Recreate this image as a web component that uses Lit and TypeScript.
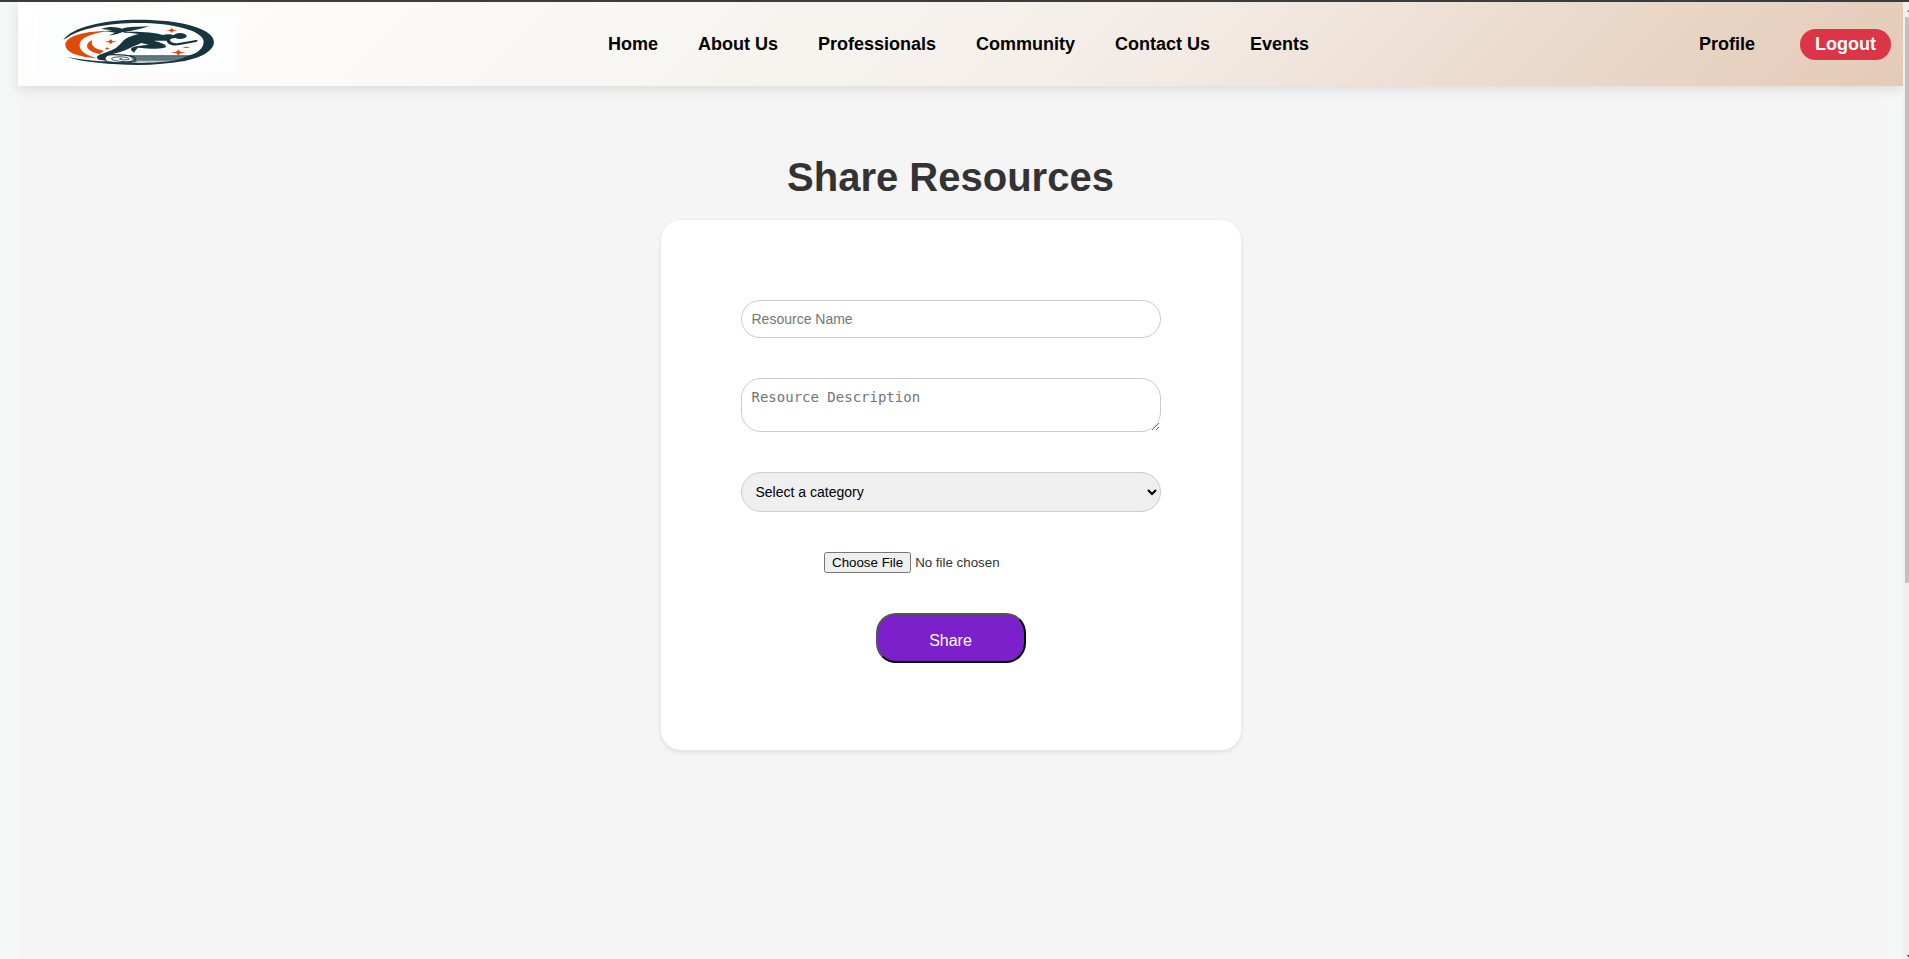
import { LitElement, html, css } from "lit";
import { customElement } from "lit/decorators.js";

@customElement("brand-logo")
class BrandLogo extends LitElement {
  static styles = css`
    :host { display: block; width: 200px; height: 60px; background: #fcfefd; }
    .art { display: block; width: 200px; height: 60px; filter: blur(0.4px); }
    .navy { fill: #18343f; }
    .orange { fill: #df4a0b; }
    .grey { fill: #6c7f86; }
    .line { fill: none; stroke: #18343f; stroke-width: 3.5; }
    .thin { fill: none; stroke: #18343f; stroke-width: 2.5; }
    .stripe { fill: none; stroke: #47606a; stroke-width: 2; }
  `;
  render() {
    return html`<svg class="art" viewBox="114 36 600 180" role="img" aria-label="Logo">
      <path class="grey" d="M385 165H578L560 182H400Z" />
      <path class="stripe" d="M400 170H575M400 177H566M390 183H555" />
      <path class="navy" d="M190 119C218 80 315 59 415 59C545 59 641 86 642 126C641 152 606 172 560 181C510 191 462 195 415 195C330 194 250 187 200 171C260 182 340 188 415 188C500 188 540 181 555 171C594 161 611 146 611 124C608 92 520 69 415 69C325 69 240 85 200 114Z" />
      <path class="orange" d="M327 93C240 93 195 112 196 136C198 158 235 171 290 175C252 163 237 151 239 132C241 115 270 101 327 93Z" />
      <path class="orange" d="M277 121C254 128 252 154 299 162L312 153C286 147 270 138 277 121Z" />
      <path class="navy" d="M304 87C330 77 350 82 366 86C390 78 415 82 449 78C430 86 412 87 392 93C372 96 362 97 352 102L325 107L345 98L315 93L338 91Z" />
      <path class="navy" d="M372 96C410 94 465 97 488 105C502 101 516 103 526 107L524 115C512 115 508 119 512 124C518 130 528 131 536 129L588 120C595 120 594 125 588 126L535 136C514 138 502 132 500 122L462 122C480 127 504 134 497 142C485 149 440 145 414 143L408 149L402 158L393 150C390 142 404 137 446 134L424 129C408 136 396 141 384 147C368 155 350 159 328 165C315 170 313 178 323 183L297 179C282 170 298 163 315 158C338 152 353 142 363 130C372 118 384 109 416 102C400 99 386 98 372 98Z" />
      <ellipse class="navy" cx="540" cy="108" rx="20" ry="9" />
      <path class="line" d="M300 166C330 163 374 163 400 170C417 179 403 187 366 185" />
      <path class="thin" d="M366 185C335 181 326 177 343 172C361 168 389 172 387 178C370 182 347 177 365 175M313 183C345 190 390 190 410 184" />
      <path class="orange" d="M332 118L338 123L351 125L338 127L332 132L326 127L314 125L326 123ZM515 84L520 89L533 91L520 93L515 98L510 93L498 91L510 89ZM535 149L541 155L557 158L541 160L535 166L529 160L512 158L529 155ZM548 142C555 139 564 140 571 142C562 145 554 145 548 142ZM321 142L328 146L321 149L315 146Z" />
    </svg>`;
  }
}

@customElement("site-header")
class SiteHeader extends LitElement {
  static styles = css`
    :host { display: block; }
    .bar {
      display: grid; grid-template-columns: 1fr auto 1fr; align-items: center;
      height: 84px; padding: 0 12px 0 20px; box-sizing: border-box;
      background: linear-gradient(135deg, #ffffff 0%, #f6f3ee 45%, #f3eae4 62%, #e9d7c8 83%, #e5cab8 100%);
      box-shadow: 0 4px 12px rgba(0, 0, 0, 0.1);
      font: bold 18px/21px "Liberation Sans", Arial, sans-serif;
    }
    .logo { margin-bottom: 4px; }
    .links { display: flex; gap: 40px; margin-right: 12px; }
    .link { color: #000; text-decoration: none; }
    .account { display: flex; justify-content: flex-end; align-items: center; gap: 45px; }
    .logout {
      font: inherit; color: #fff; background: #dc3545; border: 0;
      border-radius: 20px; padding: 5px 15px; height: 31px; margin-top: 1px;
    }
  `;
  links = ["Home", "About Us", "Professionals", "Community", "Contact Us", "Events"];
  render() {
    return html`<header class="bar">
      <brand-logo class="logo"></brand-logo>
      <nav class="links">${this.links.map((l) => html`<a class="link" href="#">${l}</a>`)}</nav>
      <div class="account">
        <a class="link" href="#">Profile</a>
        <button class="logout">Logout</button>
      </div>
    </header>`;
  }
}

@customElement("share-form")
class ShareForm extends LitElement {
  static styles = css`
    :host { display: block; }
    .card {
      display: flex; flex-direction: column; align-items: center; gap: 40px;
      width: 580px; height: 530px; padding: 80px; box-sizing: border-box;
      background: #fff; border-radius: 20px; box-shadow: 0 2px 5px rgba(0, 0, 0, 0.1);
      font-family: "Liberation Sans", Arial, sans-serif; color: #333;
    }
    .field {
      width: 420px; margin: 0; padding: 10px; box-sizing: border-box; flex: none;
      border: 1px solid #ccc; border-radius: 20px; font-size: 14px;
    }
    .name { height: 38px; font-family: "Liberation Sans", Arial, sans-serif; }
    .description { height: 54px; font-family: "DejaVu Sans Mono", monospace; }
    .category { height: 40px; font-family: "Liberation Sans", Arial, sans-serif; background-color: #efefef; color: #000; }
    .file { width: 253px; height: 21px; flex: none; font: 13.333px "Liberation Sans", Arial, sans-serif; color: #333; }
    .submit {
      width: 150px; height: 50px; flex: none; padding: 7px 6px 1px;
      border: 2px outset #000; border-radius: 20px; background: #7b20cb; color: #fff;
      font: 16px "Liberation Sans", Arial, sans-serif;
    }
  `;
  render() {
    return html`<form class="card">
      <input class="field name" placeholder="Resource Name" />
      <textarea class="field description" placeholder="Resource Description"></textarea>
      <select class="field category"><option>Select a category</option></select>
      <input class="file" type="file" />
      <button class="submit" type="button">Share</button>
    </form>`;
  }
}

@customElement("app-root")
class AppRoot extends LitElement {
  static styles = css`
    :host {
      display: grid; grid-template-columns: minmax(0, 1fr) 6px; height: 959px; overflow: hidden;
      box-sizing: border-box; border-top: 2px solid #3c3c3c; background: #f4f7f6;
    }
    .page { padding-left: 18px; overflow: hidden; }
    .content {
      display: flex; flex-direction: column; align-items: center; height: 873px;
      box-sizing: border-box; padding-right: 20px;
      background: linear-gradient(90deg, #f5f5f5 0, #f5f5f5 1865px, #f4f7f6 1865px);
    }
    .title {
      margin: 68px 0 19px; color: #333;
      font: bold 40px/47px "Liberation Sans", Arial, sans-serif;
    }
    .head { position: relative; }
    .scroll { display: flex; flex-direction: column; align-items: flex-end; background: #f0f0f0; }
    .arrow { display: block; width: 2px; height: 15px; }
    .thumb { width: 4px; height: 566px; background: #c1c1c1; }
    .rest { flex: 1; }
  `;
  render() {
    return html`
      <div class="page">
        <site-header class="head"></site-header>
        <main class="content">
          <h1 class="title">Share Resources</h1>
          <share-form></share-form>
        </main>
      </div>
      <div class="scroll">
        <svg class="arrow" viewBox="0 0 2 15"><path d="M0 10V9H1V8H2V10Z" fill="#888" /></svg>
        <div class="thumb"></div>
        <div class="rest"></div>
        <svg class="arrow" viewBox="0 0 2 15"><path d="M0 11H2V13H1V12H0Z" fill="#505050" /></svg>
      </div>`;
  }
}
